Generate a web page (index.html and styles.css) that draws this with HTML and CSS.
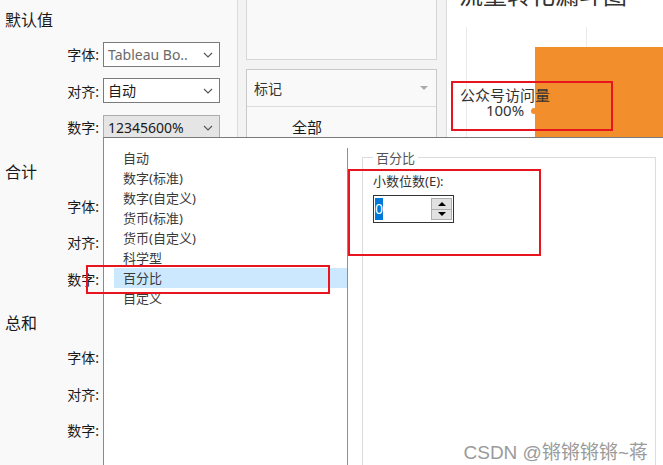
FILE: index.html
```html
<!DOCTYPE html>
<html lang="zh-CN">
<head>
    <meta charset="UTF-8">
    <meta name="viewport" content="width=device-width, initial-scale=1.0">
    <title>格式 - 数字</title>
    <link rel="stylesheet" href="styles.css">
</head>
<body>

    <div class="app">

        <!-- Format pane -->
        <aside class="format">
            <section class="fmt-section">
                <h3>默认值</h3>
                <div class="fmt-row">
                    <label>字体:</label>
                    <div class="select muted">Tableau Bo..<svg class="chev" viewBox="0 0 10 6"><polyline points="1,1 5,5 9,1"/></svg></div>
                </div>
                <div class="fmt-row">
                    <label>对齐:</label>
                    <div class="select">自动<svg class="chev" viewBox="0 0 10 6"><polyline points="1,1 5,5 9,1"/></svg></div>
                </div>
                <div class="fmt-row">
                    <label>数字:</label>
                    <div class="select open">12345600%<svg class="chev" viewBox="0 0 10 6"><polyline points="1,1 5,5 9,1"/></svg></div>
                </div>
            </section>

            <section class="fmt-section">
                <h3>合计</h3>
                <div class="fmt-row"><label>字体:</label><div class="select"></div></div>
                <div class="fmt-row"><label>对齐:</label><div class="select"></div></div>
                <div class="fmt-row"><label>数字:</label><div class="select"></div></div>
            </section>

            <section class="fmt-section">
                <h3>总和</h3>
                <div class="fmt-row"><label>字体:</label><div class="select"></div></div>
                <div class="fmt-row"><label>对齐:</label><div class="select"></div></div>
                <div class="fmt-row"><label>数字:</label><div class="select"></div></div>
            </section>
        </aside>

        <!-- Shelves / marks card -->
        <div class="shelves">
            <div class="shelf-top"></div>
            <div class="marks-card">
                <div class="marks-head">
                    <span>标记</span>
                    <span class="tri"></span>
                </div>
                <div class="marks-type">全部</div>
            </div>
        </div>

        <!-- View -->
        <main class="viz">
            <div class="viz-title">流量转化漏斗图</div>
            <div class="plot">
                <div class="grid-line g1"></div>
                <div class="grid-line g2"></div>
                <div class="bar"></div>
                <div class="bar-dot"></div>
                <div class="bar-label">
                    <div>公众号访问量</div>
                    <div>100%</div>
                </div>
            </div>
        </main>
    </div>

    <!-- Number format dropdown -->
    <div class="popup">
        <ul class="fmt-list">
            <li>自动</li>
            <li>数字(标准)</li>
            <li>数字(自定义)</li>
            <li>货币(标准)</li>
            <li>货币(自定义)</li>
            <li>科学型</li>
            <li class="selected">百分比</li>
            <li>自定义</li>
        </ul>
        <div class="fmt-options">
            <fieldset class="group">
                <legend>百分比</legend>
                <div class="field-label">小数位数(E):</div>
                <div class="spin">
                    <span class="spin-value">0</span>
                    <div class="spin-btns">
                        <span class="spin-btn up"></span>
                        <span class="spin-btn down"></span>
                    </div>
                </div>
            </fieldset>
        </div>
    </div>

    <!-- Red annotation boxes -->
    <div class="mark-box box-label"></div>
    <div class="mark-box box-item"></div>
    <div class="mark-box box-decimals"></div>

    <div class="watermark">CSDN @锵锵锵锵~蒋</div>

</body>
</html>
```

FILE: styles.css
```css
/* General */
body {
    margin: 0;
    width: 663px;
    height: 465px;
    overflow: hidden;
    position: relative;
    font-family: "Noto Sans", "Noto Sans CJK SC", sans-serif;
    color: #1a1a1a;
    background: #f3f3f3;
}

.app {
    display: flex;
    height: 465px;
}

/* Format pane */
.format {
    width: 237px;
    flex-shrink: 0;
    background: #f9f9f9;
    border-right: 1px solid #dcdcdc;
}

.fmt-section {
    margin-bottom: 6px;
}

.fmt-section h3 {
    margin: 0;
    height: 36px;
    padding: 4px 0 0 5px;
    box-sizing: border-box;
    line-height: 32px;
    font-size: 16px;
    font-weight: normal;
}

.fmt-row {
    display: grid;
    grid-template-columns: 99px 117px;
    column-gap: 4px;
    align-items: center;
    height: 36.5px;
}

.fmt-row label {
    text-align: right;
    font-size: 14px;
}

.select {
    position: relative;
    height: 25px;
    box-sizing: border-box;
    border: 1px solid #7a7a7a;
    background: #fff;
    padding-left: 4px;
    font-size: 14px;
    line-height: 23px;
    white-space: nowrap;
    overflow: hidden;
}

.select.muted { color: #6a6a6a; }

.select.open {
    background: #e5e5e5;
    border-color: #adadad;
}

.chev {
    position: absolute;
    right: 6px;
    top: 9px;
    width: 10px;
    height: 6px;
    fill: none;
    stroke: #555;
    stroke-width: 1.1;
}

/* Shelves */
.shelves {
    width: 191px;
    flex-shrink: 0;
    padding: 0 9px 0 8px;
}

.shelf-top {
    height: 60px;
    box-sizing: border-box;
    background: #f9f9f9;
    border: 1px solid #d6d6d6;
    border-top: none;
}

.marks-card {
    margin-top: 9px;
    height: 100px;
    background: #f9f9f9;
    border: 1px solid #c9c9c9;
}

.marks-head {
    display: flex;
    justify-content: space-between;
    align-items: center;
    height: 36px;
    padding: 0 8px 0 7px;
    border-bottom: 1px solid #dcdcdc;
    font-size: 14px;
    color: #333;
}

.tri {
    width: 0;
    height: 0;
    border-left: 4px solid transparent;
    border-right: 4px solid transparent;
    border-top: 4px solid #aaa;
}

.marks-type {
    padding: 9px 0 0 45px;
    font-size: 15px;
}

/* View */
.viz {
    flex: 1;
    background: #fff;
    border-left: 1px solid #dadada;
    overflow: hidden;
}

.viz-title {
    margin: -18px 0 0 12px;
    font-size: 24px;
    line-height: 26px;
    color: #333;
    white-space: nowrap;
}

.plot {
    position: relative;
    height: 450px;
}

.grid-line {
    position: absolute;
    top: 19px;
    bottom: 0;
    width: 1px;
    background: #ebebeb;
}

.g1 { left: 19px; }
.g2 { left: 139px; }

.bar {
    position: absolute;
    left: 88px;
    top: 39px;
    right: 0;
    bottom: 0;
    background: #f28e2b;
}

.bar-dot {
    position: absolute;
    left: 84px;
    top: 100px;
    width: 6px;
    height: 6px;
    border-radius: 50%;
    background: #f28e2b;
}

.bar-label {
    position: absolute;
    left: 6px;
    top: 80px;
    width: 104px;
    text-align: center;
    font-size: 15px;
    line-height: 15px;
    color: #333;
}

/* Dropdown */
.popup {
    position: absolute;
    left: 103px;
    top: 137px;
    right: 0;
    bottom: 0;
    display: flex;
    background: #fff;
    border-top: 1px solid #7a7a7a;
    border-left: 1px solid #8a8a8a;
}

.fmt-list {
    list-style: none;
    margin: 10px 0 0;
    padding: 0 0 0 10px;
    width: 233px;
    border-right: 1px solid #8f8f8f;
}

.fmt-list li {
    height: 20px;
    line-height: 20px;
    padding-left: 9px;
    font-size: 13px;
    color: #3a3a3a;
}

.fmt-list li.selected {
    background: #cce8ff;
}

.fmt-options {
    flex: 1;
    padding: 10px 7px 0 14px;
}

.group {
    margin: 0;
    height: 330px;
    padding: 5px 0 0 10px;
    border: 1px solid #dcdcdc;
    border-bottom: none;
}

.group legend {
    padding: 0 3px;
    margin-left: 0;
    font-size: 13px;
    color: #555;
}

.field-label {
    font-size: 13px;
    color: #333;
    line-height: 18px;
}

.spin {
    display: flex;
    justify-content: space-between;
    width: 81px;
    height: 28px;
    box-sizing: border-box;
    margin-top: 5px;
    border: 1px solid #333;
    padding: 2px 1px 2px 1px;
}

.spin-value {
    background: #0078d7;
    color: #fff;
    font-size: 14px;
    line-height: 22px;
    padding: 0;
}

.spin-btns {
    display: flex;
    flex-direction: column;
    width: 19px;
    border: 1px solid #adadad;
    background: #e1e1e1;
}

.spin-btn {
    flex: 1;
    display: flex;
    justify-content: center;
    align-items: center;
}

.spin-btn.up { border-bottom: 1px solid #adadad; }

.spin-btn.up::before {
    content: "";
    border-left: 4px solid transparent;
    border-right: 4px solid transparent;
    border-bottom: 4px solid #000;
}

.spin-btn.down::before {
    content: "";
    border-left: 4px solid transparent;
    border-right: 4px solid transparent;
    border-top: 4px solid #000;
}

/* Annotations */
.mark-box {
    position: absolute;
    border: 2px solid #e8141e;
}

.box-label { left: 451px; top: 81px; width: 158px; height: 46px; }
.box-item { left: 86px; top: 265px; width: 240px; height: 25px; }
.box-decimals { left: 348px; top: 169px; width: 189px; height: 83px; }

.watermark {
    position: absolute;
    right: 15px;
    bottom: 1px;
    font-family: "Liberation Sans", "Noto Sans CJK SC", sans-serif;
    font-size: 19px;
    color: #9a9a9a;
    text-shadow: 0 0 2px #fff;
}
```
